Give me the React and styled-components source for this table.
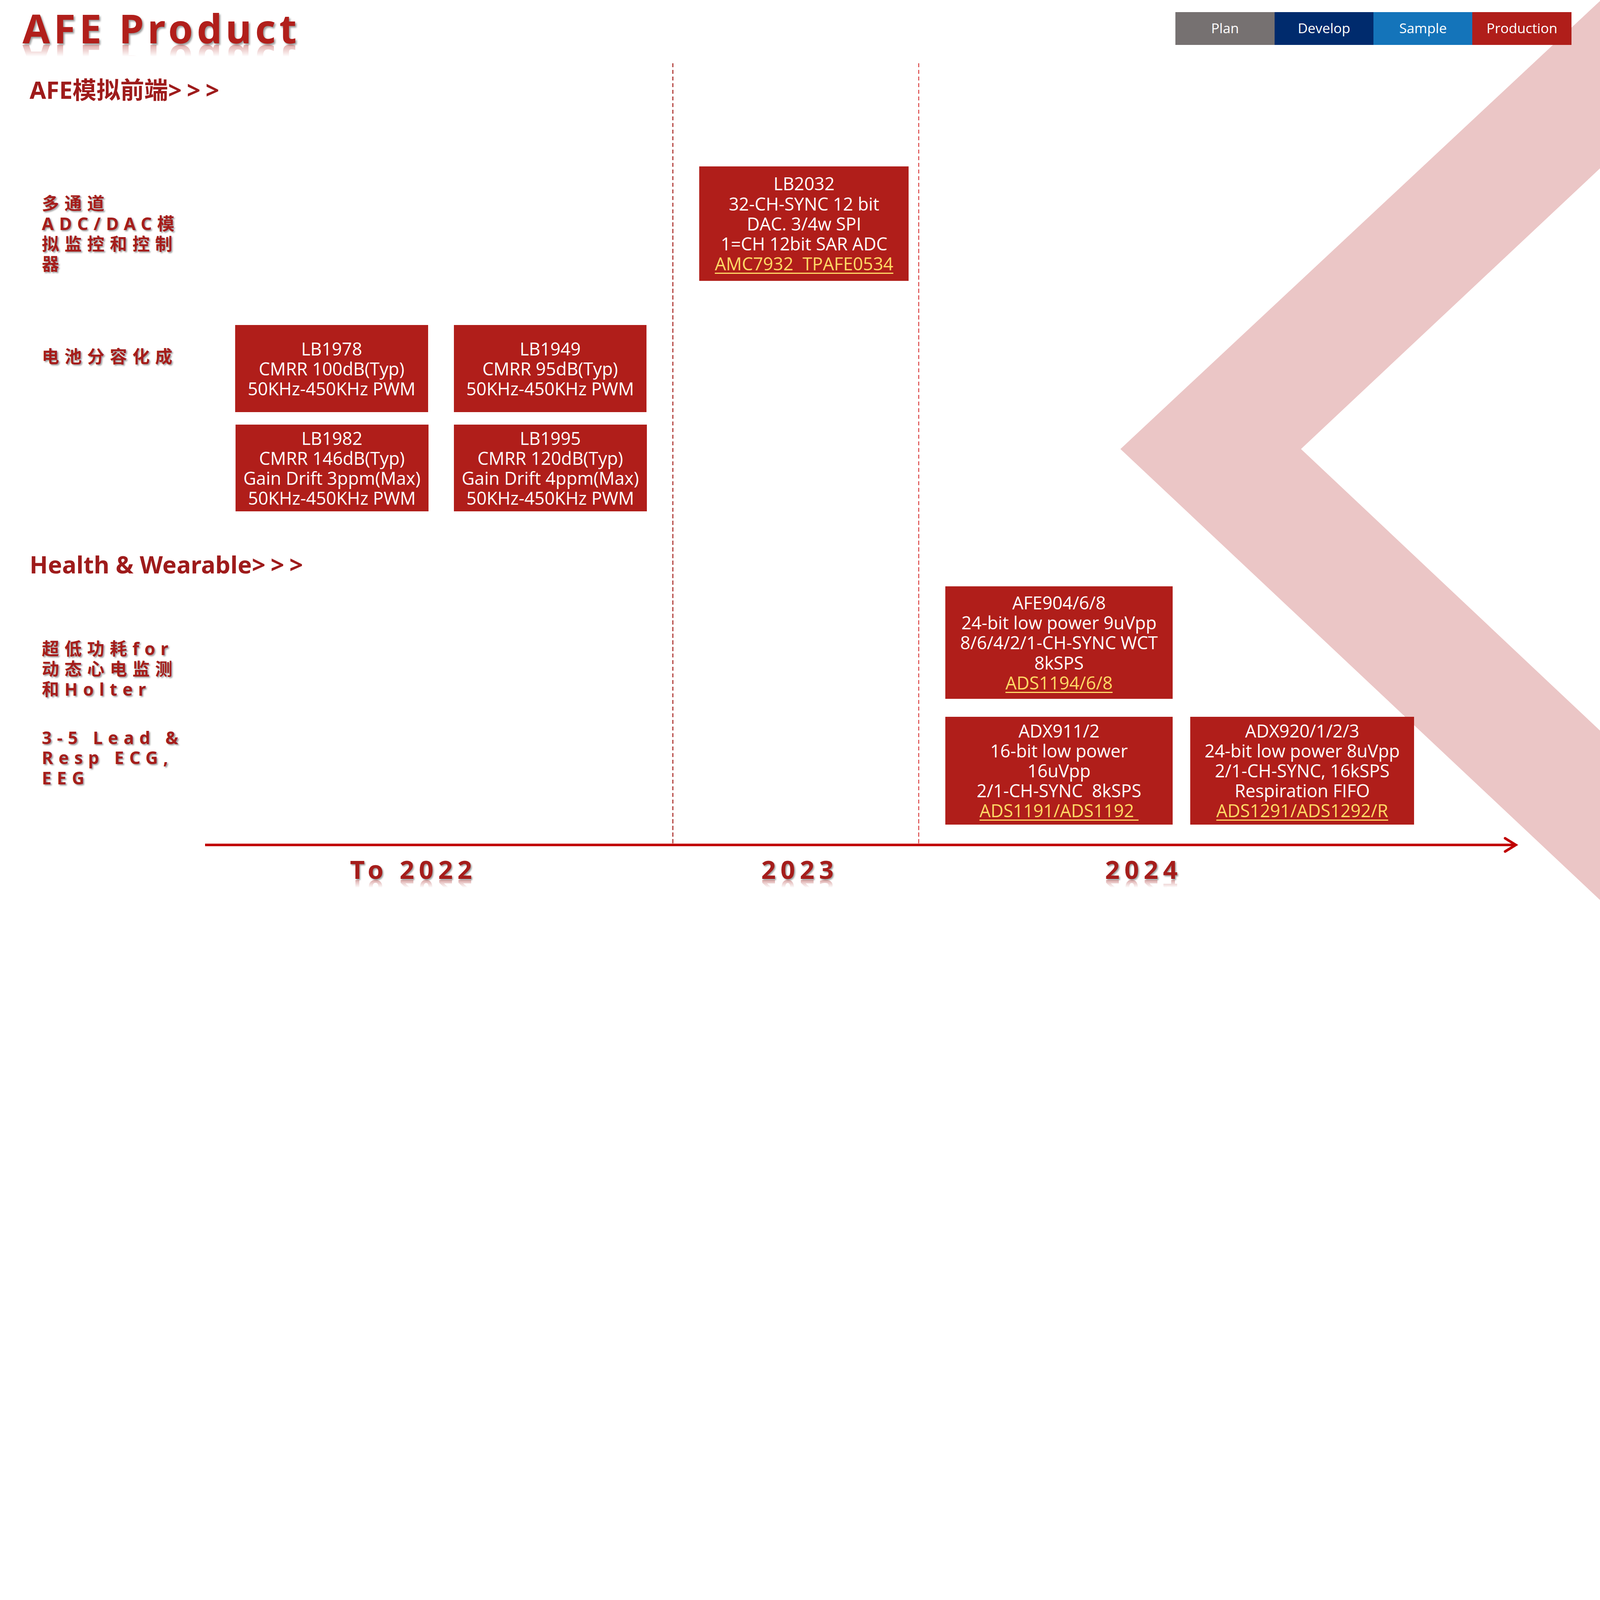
import styled, { createGlobalStyle } from 'styled-components'

// reference is measured on a 1568 x 882 grid; everything scales with the viewport width
const u = (n) => `${(n / 15.68).toFixed(4)}vw`

const RED = '#B01E1A'
const INK = '#A51D1B'

const stages = [
  { name: 'Plan', color: '#767171' },
  { name: 'Develop', color: '#002B6D' },
  { name: 'Sample', color: '#1474BA' },
  { name: 'Production', color: '#B01E1A' },
]

// heading, LB2032, gap, cards, gap, cards, heading, AFE904, gap, ADX, gap, axis, years
const rowSizes = [101, 112.2, 43.5, 85.3, 12, 85.2, 73.3, 110.5, 17.3, 105.7, 18.5, 3, 52.5]

const lb2032 = {
  id: 'LB2032',
  lines: ['LB2032', '32-CH-SYNC 12 bit', 'DAC. 3/4w SPI', '1=CH 12bit SAR ADC'],
  link: 'AMC7932  TPAFE0534',
  w: 205.2,
}

const batteryTop = [
  { id: 'LB1978', lines: ['LB1978', 'CMRR 100dB(Typ)', '50KHz-450KHz PWM'], w: 189 },
  { id: 'LB1949', lines: ['LB1949', 'CMRR 95dB(Typ)', '50KHz-450KHz PWM'], w: 189 },
]

const batteryBottom = [
  { id: 'LB1982', lines: ['LB1982', 'CMRR 146dB(Typ)', 'Gain Drift 3ppm(Max)', '50KHz-450KHz PWM'], w: 189.2 },
  { id: 'LB1995', lines: ['LB1995', 'CMRR 120dB(Typ)', 'Gain Drift 4ppm(Max)', '50KHz-450KHz PWM'], w: 189.2 },
]

const holter = [
  {
    id: 'AFE904',
    lines: ['AFE904/6/8', '24-bit low power 9uVpp', '8/6/4/2/1-CH-SYNC WCT', '8kSPS'],
    link: 'ADS1194/6/8',
    w: 223.1,
  },
]

const ecg = [
  {
    id: 'ADX911',
    lines: ['ADX911/2', '16-bit low power', '16uVpp', '2/1-CH-SYNC  8kSPS'],
    link: 'ADS1191/ADS1192 ',
    w: 223.1,
  },
  {
    id: 'ADX920',
    lines: ['ADX920/1/2/3', '24-bit low power 8uVpp', '2/1-CH-SYNC, 16kSPS', 'Respiration FIFO'],
    link: 'ADS1291/ADS1292/R',
    w: 219.4,
  },
]

const years = [
  { label: 'To 2022', col: 2, left: 142 },
  { label: '2023', col: 3, left: 87 },
  { label: '2024', col: 4, left: 183 },
]

const GlobalStyle = createGlobalStyle`
  * { box-sizing: border-box; }
  html, body { margin: 0; padding: 0; background: #fff; overflow: hidden; }
`

const Slide = styled.div`
  position: relative;
  width: ${u(1568)};
  height: ${u(882)};
  overflow: hidden;
  background: #fff;
`

const Backdrop = styled.svg`
  position: absolute;
  inset: 0;
  width: 100%;
  height: 100%;
  pointer-events: none;
`

const Header = styled.header`
  position: relative;
  display: flex;
  justify-content: space-between;
  align-items: flex-start;
  height: ${u(62)};
  padding: 0 ${u(28)} 0 ${u(22)};
`

// mirrored copy under the glyphs, faded out quickly
const reflect = (top) => `
  position: relative;
  &::after {
    content: attr(data-text);
    position: absolute;
    left: 0;
    top: ${u(top)};
    transform: scaleY(-1);
    text-shadow: none;
    opacity: 0.45;
    -webkit-mask-image: linear-gradient(to top, #000 12%, transparent 42%);
    mask-image: linear-gradient(to top, #000 12%, transparent 42%);
    pointer-events: none;
  }
`

const Title = styled.h1`
  margin: ${u(4.3)} 0 0;
  font: 700 ${u(39)}/1.2 "Noto Sans", "Open Sans", sans-serif;
  letter-spacing: ${u(3.6)};
  color: #B11F1B;
  text-shadow: ${u(1.3)} ${u(1.5)} ${u(1.6)} rgba(0, 0, 0, 0.4);
  ${reflect(31.2)}
`

const Legend = styled.div`
  display: flex;
  margin-top: ${u(11.7)};
`

const Stage = styled.div`
  width: ${u(97)};
  height: ${u(32.3)};
  display: flex;
  align-items: center;
  justify-content: center;
  padding-bottom: ${u(1)};
  background: ${(p) => p.$color};
  color: #fff;
  font: 400 ${u(13.5)} "Open Sans", sans-serif;
`

const Board = styled.div`
  position: relative;
  display: grid;
  grid-template-columns: ${u(201)} ${u(458)} ${u(241)} ${u(588)} 1fr;
  grid-template-rows: ${rowSizes.map(u).join(' ')};
`

const Lane = styled.div`
  grid-column: ${(p) => p.$col};
  grid-row: 1 / 12;
  width: ${u(0.8)};
  background: repeating-linear-gradient(
    to bottom,
    ${(p) => p.$color} 0 ${u(4)},
    transparent ${u(4)} ${u(6.5)}
  );
`

const SectionTitle = styled.h2`
  grid-column: 1 / 4;
  grid-row: ${(p) => p.$row};
  margin: 0;
  padding: ${(p) => u(p.$top)} 0 0 ${u(29)};
  font: 700 ${u(23.4)}/1.2 "Noto Sans", "Noto Sans CJK SC", sans-serif;
  color: #9E1B1B;
  white-space: nowrap;
`

const Arrows = styled.span`
  letter-spacing: ${u(5)};
`

const Label = styled.div`
  grid-column: 1;
  grid-row: ${(p) => p.$row};
  padding: ${(p) => u(p.$top)} 0 0 ${u(41)};
  font: 700 ${u(17)}/${u(19.8)} "Noto Sans", "Noto Sans CJK SC", sans-serif;
  letter-spacing: ${u(5.2)};
  color: ${INK};
  white-space: nowrap;
  text-shadow: ${u(1.1)} ${u(1.3)} ${u(1.4)} rgba(0, 0, 0, 0.38);
`

const LabelLine = styled.span`
  display: block;
`

const Slot = styled.div`
  grid-column: ${(p) => p.$col};
  grid-row: ${(p) => p.$row};
  display: flex;
  gap: ${(p) => u(p.$gap || 0)};
  padding-left: ${(p) => u(p.$left)};
`

const Card = styled.div`
  width: ${(p) => u(p.$w)};
  background: ${RED};
  display: flex;
  flex-direction: column;
  justify-content: center;
  align-items: center;
  color: #fff;
  text-align: center;
  font: 400 ${u(17.3)}/${u(19.6)} "Open Sans", "Noto Sans", sans-serif;
`

const CardLine = styled.span`
  white-space: pre;
`

const PartLink = styled.span`
  white-space: pre;
  color: #FFD966;
  text-decoration: underline;
  text-decoration-thickness: ${u(1.3)};
  text-underline-offset: ${u(2.2)};
`

const Axis = styled.svg`
  grid-column: 2 / 5;
  grid-row: 12;
  width: 100%;
  height: 100%;
  display: block;
  overflow: visible;
`

const Year = styled.div`
  grid-column: ${(p) => p.$col};
  grid-row: 13;
  padding: ${u(7.2)} 0 0 ${(p) => u(p.$left)};
`

const YearText = styled.span`
  display: inline-block;
  font: 700 ${u(25)}/1.2 "Noto Sans", sans-serif;
  letter-spacing: ${u(4.6)};
  color: ${INK};
  white-space: nowrap;
  text-shadow: ${u(1)} ${u(1.3)} ${u(1.5)} rgba(0, 0, 0, 0.4);
  ${reflect(20.4)}
`

function ProductCard({ item }) {
  return (
    <Card $w={item.w}>
      {item.lines.map((line) => (
        <CardLine key={line}>{line}</CardLine>
      ))}
      {item.link && <PartLink>{item.link}</PartLink>}
    </Card>
  )
}

function AreaLabel({ row, top, lines }) {
  return (
    <Label $row={row} $top={top}>
      {lines.map((line) => (
        <LabelLine key={line}>{line}</LabelLine>
      ))}
    </Label>
  )
}

export default function App() {
  return (
    <>
      <GlobalStyle />
      <Slide>
        <Backdrop viewBox="0 0 1568 882" preserveAspectRatio="none">
          <polygon
            points="1569,0 1098,440 1568,882 1568,716 1275,440 1568,165"
            fill="#EBC6C6"
          />
        </Backdrop>

        <Header>
          <Title data-text="AFE Product">AFE Product</Title>
          <Legend>
            {stages.map((s) => (
              <Stage key={s.name} $color={s.color}>{s.name}</Stage>
            ))}
          </Legend>
        </Header>

        <Board>
          <Lane $col={3} $color="#B3423F" />
          <Lane $col={4} $color="#D42020" />

          <SectionTitle $row={1} $top={11.7}>
            AFE模拟前端<Arrows>&gt;&gt;&gt;</Arrows>
          </SectionTitle>

          <AreaLabel row={2} top={26.6} lines={['多通道', 'ADC/DAC模', '拟监控和控制', '器']} />
          <Slot $row={2} $col={3} $left={26.4}>
            <ProductCard item={lb2032} />
          </Slot>

          <AreaLabel row={4} top={20.9} lines={['电池分容化成']} />
          <Slot $row={4} $col={2} $left={29.5} $gap={25.2}>
            {batteryTop.map((c) => <ProductCard key={c.id} item={c} />)}
          </Slot>
          <Slot $row={6} $col={2} $left={29.7} $gap={24.8}>
            {batteryBottom.map((c) => <ProductCard key={c.id} item={c} />)}
          </Slot>

          <SectionTitle $row={7} $top={37.7}>
            Health &amp; Wearable<Arrows>&gt;&gt;&gt;</Arrows>
          </SectionTitle>

          <AreaLabel row={8} top={51.6} lines={['超低功耗for', '动态心电监测', '和Holter']} />
          <Slot $row={8} $col={4} $left={26.3}>
            {holter.map((c) => <ProductCard key={c.id} item={c} />)}
          </Slot>

          <AreaLabel row={10} top={10.8} lines={['3-5 Lead &', 'Resp ECG,', 'EEG']} />
          <Slot $row={10} $col={4} $left={26.3} $gap={17.1}>
            {ecg.map((c) => <ProductCard key={c.id} item={c} />)}
          </Slot>

          <Axis viewBox="0 0 1287 3" preserveAspectRatio="none">
            <line x1="0" y1="1.5" x2="1284" y2="1.5" stroke="#C00000" strokeWidth="2.5" />
            <polyline
              points="1274,-5 1284.5,1.5 1274,8"
              fill="none"
              stroke="#C00000"
              strokeWidth="2.5"
              strokeLinecap="round"
              strokeLinejoin="miter"
            />
          </Axis>

          {years.map((y) => (
            <Year key={y.label} $col={y.col} $left={y.left}>
              <YearText data-text={y.label}>{y.label}</YearText>
            </Year>
          ))}
        </Board>
      </Slide>
    </>
  )
}
